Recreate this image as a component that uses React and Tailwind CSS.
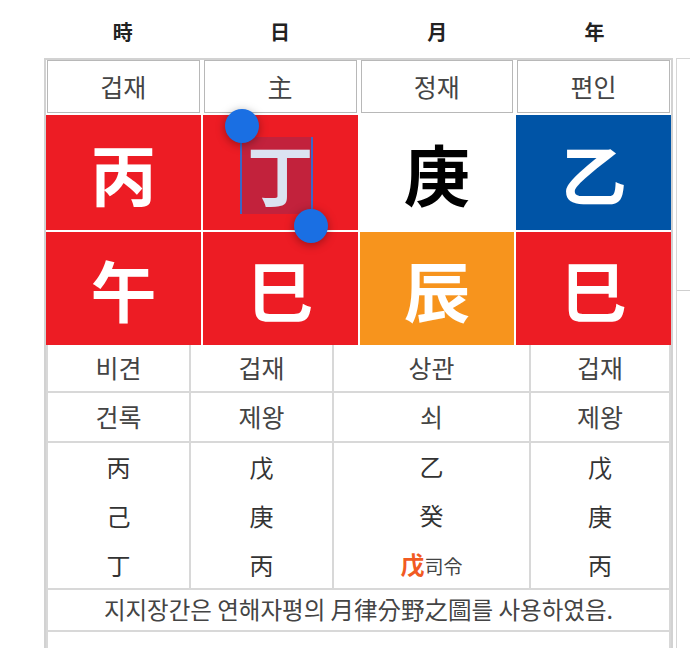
import React from 'react';

const heads = ['時', '日', '月', '年'];
const gods = ['겁재', '主', '정재', '편인'];
const sans = "font-['Noto_Sans_CJK_KR','Noto_Sans_CJK_SC',sans-serif]";

export default function App() {
  return (
    <div className={`w-[690px] h-[648px] overflow-hidden bg-white ${sans}`}>
      {/* Pillar headers */}
      <div className="ml-[44px] w-[629px] h-[58px] grid grid-cols-4 items-center pt-[6px]">
        {heads.map((h) => (
          <div key={h} className="text-center text-[20px] font-bold text-[#222]">
            {h}
          </div>
        ))}
      </div>

      <div className="flex gap-[3px]">
        {/* Main chart */}
        <div className="ml-[44px] w-[629px] h-[600px] border-x-2 border-t-2 border-[#d2d2d2]">
          {/* Ten gods on stems */}
          <div className="grid grid-cols-4 gap-[4px] px-[1px]">
            {gods.map((g, i) => (
              <div
                key={i}
                className="h-[53px] flex items-center justify-center border border-[#b8b8b8] text-[25px] text-[#444]"
              >
                {g}
              </div>
            ))}
          </div>

          {/* Stems & branches */}
          <div className="mt-[2px] grid grid-cols-4 grid-rows-[115px_113px] gap-[2px] bg-white">
            <div className="bg-[#ed1c24] flex items-center justify-center text-[66px] font-bold text-white">丙</div>
            <div className="relative bg-[#ed1c24] flex items-center justify-center text-[66px] font-bold text-[#dbe3f1]">
              {/* text selection */}
              <div className="absolute left-[37px] top-[22px] w-[71px] h-[77px] bg-[#c2223c]" />
              <span className="relative">丁</span>
              <div className="absolute left-[37px] top-[11px] w-[2px] h-[88px] bg-[#3a66c8]" />
              <div className="absolute left-[108px] top-[22px] w-[2px] h-[89px] bg-[#3a66c8]" />
              <div className="absolute z-10 left-[22px] top-[-6px] w-[34px] h-[34px] rounded-full bg-[#1a6fe3] shadow-[0_2px_10px_rgba(0,0,0,0.35)]" />
              <div className="absolute z-10 left-[91px] top-[94px] w-[34px] h-[34px] rounded-full bg-[#1a6fe3] shadow-[0_2px_10px_rgba(0,0,0,0.35)]" />
            </div>
            <div className="bg-white flex items-center justify-center text-[66px] font-bold text-black">庚</div>
            <div className="bg-[#0054a6] flex items-center justify-center text-[66px] font-bold text-white">乙</div>
            <div className="bg-[#ed1c24] flex items-center justify-center text-[66px] font-bold text-white">午</div>
            <div className="bg-[#ed1c24] flex items-center justify-center text-[66px] font-bold text-white">巳</div>
            <div className="bg-[#f7941d] flex items-center justify-center text-[66px] font-bold text-white">辰</div>
            <div className="bg-[#ed1c24] flex items-center justify-center text-[66px] font-bold text-white">巳</div>
          </div>

          {/* Branch details */}
          <div className="grid grid-cols-[141px_141px_195px_138px] grid-rows-[46px_48px_145px_40px_40px] gap-[2px] px-[2px] bg-[#d8d8d8] text-[25px] text-[#444]">
            {['비견', '겁재', '상관', '겁재'].map((t, i) => (
              <div key={'a' + i} className="bg-white flex items-center justify-center">{t}</div>
            ))}
            {['건록', '제왕', '쇠', '제왕'].map((t, i) => (
              <div key={'b' + i} className="bg-white flex items-center justify-center">{t}</div>
            ))}
            {[
              ['丙', '己', '丁'],
              ['戊', '庚', '丙'],
              ['乙', '癸', null],
              ['戊', '庚', '丙'],
            ].map((col, i) => (
              <div key={'c' + i} className="bg-white flex flex-col justify-center items-center leading-[49px] text-[24px] text-[#333]">
                {col.map((c, j) =>
                  c ? (
                    <div key={j}>{c}</div>
                  ) : (
                    <div key={j}>
                      <span className="font-bold text-[#f15a22]">戊</span>
                      <span className="text-[19px] text-[#444]">司令</span>
                    </div>
                  )
                )}
              </div>
            ))}
            <div className="col-span-4 bg-white flex items-center justify-center text-[23.5px] text-[#444]">
              지지장간은 연해자평의 月律分野之圖를 사용하였음.
            </div>
            <div className="col-span-4 bg-white" />
          </div>
        </div>

        {/* Next panel edge */}
        <div className="flex-1 h-[600px] border-l border-t border-[#d6d6d6]">
          <div className="h-[232px] border-b border-[#cfcfcf]" />
        </div>
      </div>
    </div>
  );
}
